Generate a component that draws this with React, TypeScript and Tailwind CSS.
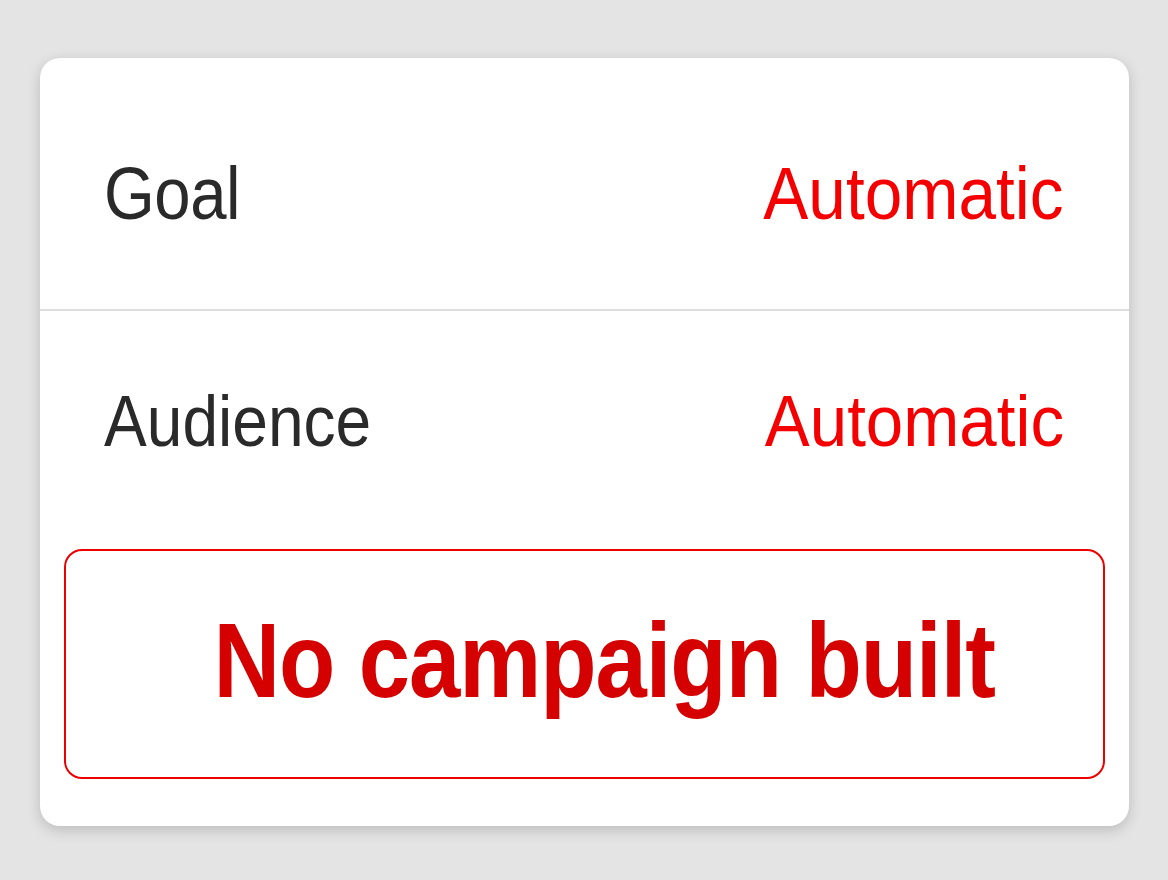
export default function App() {
  return (
    <div className="min-h-[880px] w-full bg-[#e4e4e4] pt-[58px] font-['Liberation_Sans',Arial,sans-serif]">
      <div className="mx-auto w-[1089px] h-[768px] rounded-[20px] bg-white shadow-[0_4px_14px_rgba(0,0,0,0.18)] overflow-hidden">
        {/* Goal */}
        <div className="flex h-[251px] items-center justify-between pl-[64px] pr-[65px] pt-[20px]">
          <span className="origin-left scale-x-[0.87] text-[75px] leading-none tracking-[-0.5px] text-[#2a2a2a]">
            Goal
          </span>
          <span className="origin-right scale-x-[0.9] text-[75px] leading-none text-[#f50000]">
            Automatic
          </span>
        </div>

        <div className="h-[2px] bg-[#dedede]" />

        {/* Audience */}
        <div className="flex h-[200px] items-center justify-between pl-[64px] pr-[64px] pt-[20px]">
          <span className="origin-left scale-x-[0.89] text-[72px] leading-none text-[#2a2a2a]">
            Audience
          </span>
          <span className="origin-right scale-x-[0.935] text-[72px] leading-none text-[#f50000]">
            Automatic
          </span>
        </div>

        <div className="px-[24px] pt-[38px]">
          <button className="flex h-[230px] w-full items-center justify-center rounded-[18px] border-[2.5px] border-[#ee0000] pb-[8px] pl-[40px]">
            <span className="scale-x-[0.87] whitespace-nowrap text-[106px] font-bold leading-none tracking-[-1.2px] text-[#d50000]">
              No campaign built
            </span>
          </button>
        </div>
      </div>
    </div>
  );
}
